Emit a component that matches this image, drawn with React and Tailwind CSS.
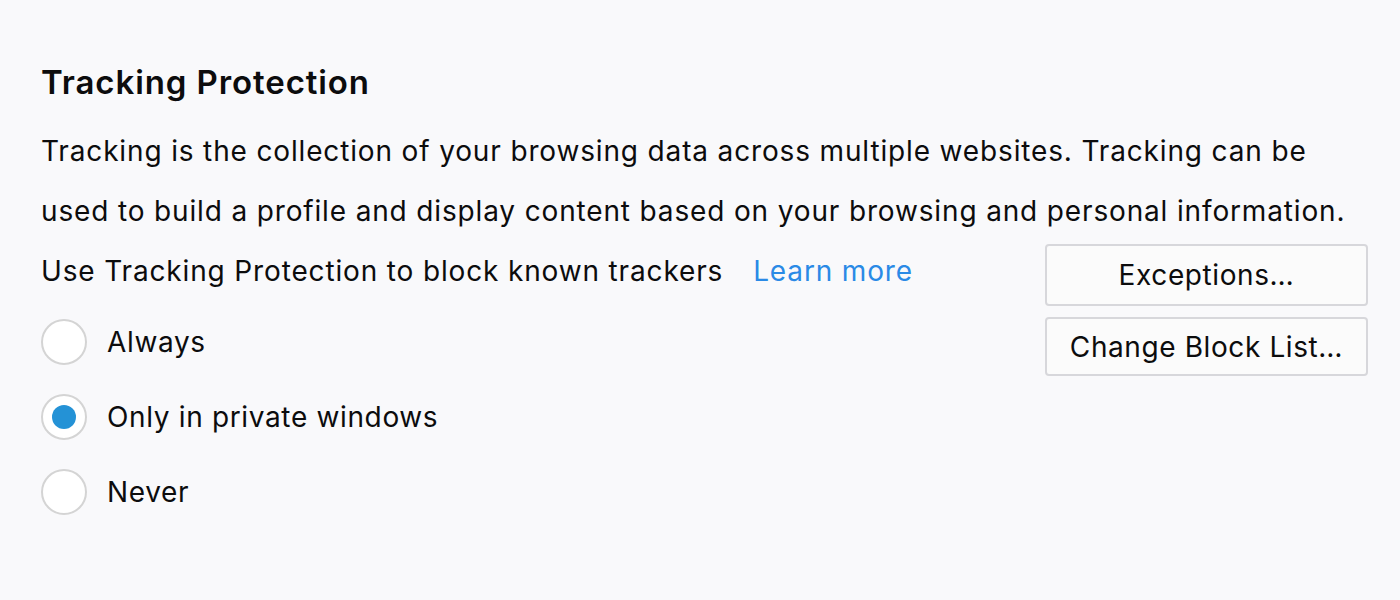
export default function App() {
  const opciones = [
    { id: "always", label: "Always", checked: false },
    { id: "private", label: "Only in private windows", checked: true },
    { id: "never", label: "Never", checked: false },
  ];

  return (
    <div
      className="w-[1400px] h-[600px] bg-[#f9f9fb] text-[#0c0c0d] pl-[41px] pt-[62px]"
      style={{ fontFamily: "Inter, 'Noto Sans', sans-serif" }}
    >
      {/* Encabezado */}
      <h1 className="text-[33px] font-semibold leading-[40px] tracking-[0.9px]">
        Tracking Protection
      </h1>

      {/* Descripción */}
      <p className="mt-[19px] text-[28px] leading-[60px] tracking-[0.85px]">
        <span className="block">
          Tracking is the collection of your browsing data across multiple websites. Tracking can be
        </span>
        <span className="block">
          used to build a profile and display content based on your browsing and personal information.
        </span>
      </p>

      <div className="flex justify-between pr-[32px]">
        <div>
          <div className="text-[28px] leading-[60px] tracking-[0.85px]">
            Use Tracking Protection to block known trackers
            <a className="ml-[30px] text-[#2a8ae6]">Learn more</a>
          </div>

          <div className="flex flex-col gap-[29px] mt-[18px]">
            {opciones.map((o) => (
              <div key={o.id} className="flex items-center gap-[20px]">
                <span className="w-[46px] h-[46px] rounded-full border-[2px] border-[#d4d4d4] bg-white flex items-center justify-center">
                  {o.checked && (
                    <span className="w-[24px] h-[24px] rounded-full bg-[#2492d6]" />
                  )}
                </span>
                <span className="text-[28px] leading-[46px] tracking-[0.65px]">{o.label}</span>
              </div>
            ))}
          </div>
        </div>

        {/* Botones */}
        <div className="flex flex-col gap-[11px] mt-[3px]">
          <button className="w-[323px] h-[62px] bg-[#fbfbfb] border-[2px] border-[#d7d7db] rounded-[4px] text-[28px] tracking-[0.6px]">
            Exceptions…
          </button>
          <button className="w-[323px] h-[59px] bg-[#fbfbfb] border-[2px] border-[#d7d7db] rounded-[4px] text-[28px] tracking-[0.6px]">
            Change Block List…
          </button>
        </div>
      </div>
    </div>
  );
}
